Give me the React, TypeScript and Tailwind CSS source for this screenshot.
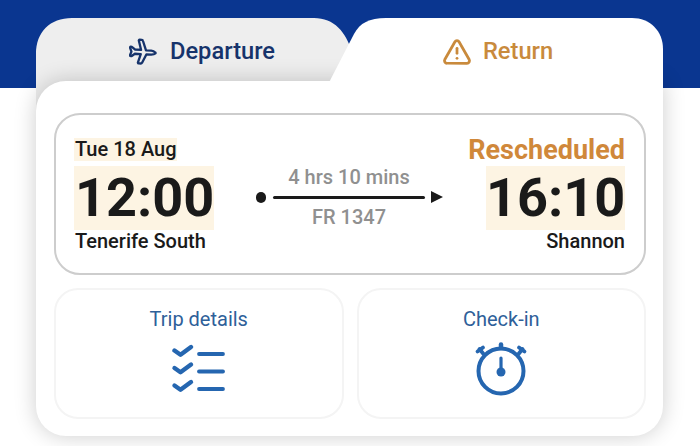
import { TriangleAlert } from "lucide-react";

function PlaneIcon() {
  return (
    <svg width="28" height="28" viewBox="0 0 30 30" fill="none" stroke="#16336b" strokeWidth="2.5" strokeLinejoin="round" strokeLinecap="round">
      <path d="M28 15.500c-.8-1-2.400-1.800-4.200-1.900l-5.600-.4L15 3.200c-.2-.7-.7-1-1.300-1.100l-2.300-.2c-.7 0-1 .5-.8 1.100l2.300 9.700-6.600-.4L3.400 9.800c-.4-.4-.9-.5-1.400-.5-.7.1-1 .7-.8 1.300l1.400 4-1.500 3.800c-.2.600.2 1.100.8 1.100.5 0 1-.2 1.400-.5l3-2.100 6.300.3-3 8.800c-.2.600.2 1.200.8 1.200l2.300.1c.6 0 1-.3 1.300-.8l4.600-8.900 5.300.2c1.900 0 3.600-.5 4.300-1.200.4-.4.400-.8 0-1.100z" />
    </svg>
  );
}

function ChecklistIcon() {
  return (
    <svg width="56" height="50" viewBox="0 0 56 50" fill="none" stroke="#2566b0" strokeLinecap="round" strokeLinejoin="round">
      <g strokeWidth="4.400">
        <path d="M3.500 6.500l6 4.200 10.500-7.700" />
        <path d="M3.500 24l6 4.200 10.500-7.700" />
        <path d="M3.500 41.500l6 4.200 10.500-7.700" />
      </g>
      <g strokeWidth="3.800">
        <path d="M28 10h24" />
        <path d="M28 27.500h24" />
        <path d="M28 45h24" />
      </g>
    </svg>
  );
}

function TimerIcon() {
  return (
    <svg width="54" height="54" viewBox="0 0 54 54" fill="none" stroke="#2566b0" strokeLinecap="round">
      <circle cx="27" cy="29" r="22.500" strokeWidth="4" />
      <path d="M27 6V2.500" strokeWidth="4.500" />
      <path d="M9.500 12L5.500 7" strokeWidth="3.800" />
      <path d="M3.500 9.500L9 5.500" strokeWidth="3.800" />
      <path d="M44.500 12l4-5" strokeWidth="3.800" />
      <path d="M50.500 9.500L45 5.500" strokeWidth="3.800" />
      <path d="M27 16v14" strokeWidth="3.200" />
      <circle cx="27" cy="30" r="4.500" fill="#2566b0" stroke="none" />
    </svg>
  );
}

export default function App() {
  return (
    <div className="h-[446px] w-[700px] overflow-hidden bg-[linear-gradient(#0a3690_88px,#ffffff_88px)] pt-[18px] pl-[36px] font-['Roboto',sans-serif]">
      <div className="relative w-[627px]">
        <svg className="absolute left-0 top-0 z-0" width="340" height="120" viewBox="0 0 340 120" aria-hidden="true">
          <path d="M0 120V36C0 14 14 0 36 0H278C298 0 310 14 316 34L304 56C301 61 298 63 292 63H30V120Z" fill="#eeeeee" />
        </svg>
        <svg className="absolute left-0 top-0 z-[2]" width="627" height="80" viewBox="0 0 627 80" aria-hidden="true">
          <path d="M285 80L318 16C324 5 333 0 350 0H596C614 0 627 13 627 31V80Z" fill="#ffffff" />
        </svg>
        <header className="relative z-[3] flex h-[63px] items-start">
          <div className="flex h-[67px] w-[314px] items-center justify-center gap-[13px] pl-[18px] text-[23.700px] font-medium text-[#16336b]">
            <PlaneIcon />
            <span>Departure</span>
          </div>
          <div className="flex h-[67px] w-[313px] items-center justify-center gap-[11px] pr-[18px] text-[23.700px] font-medium text-[#c98a3c]">
            <TriangleAlert size={30} strokeWidth={2.200} />
            <span>Return</span>
          </div>
        </header>
        <main className="relative z-[1] h-[355px] rounded-tl-[30px] rounded-b-[30px] bg-white pt-[32px] pr-[17px] pl-[18px] shadow-[0_0_22px_rgba(0,0,0,0.2)]">
          <section className="flex h-[162px] items-center rounded-[26px] border-2 border-[#cdcdcd] pt-[3px] pr-[19px] pl-[18px]">
            <div className="flex w-[140px] flex-col items-start">
              <span className="bg-[#fdf4e3] pl-px text-[20px] leading-[23px] font-medium text-[#1a1a1a]">Tue 18 Aug</span>
              <span className="mt-[5px] h-[64px] w-[140px] bg-[#fdf4e3] pl-px text-[54px] leading-[64px] font-bold text-[#1a1a1a]">12:00</span>
              <span className="mt-[-1px] pl-px text-[20px] leading-[24px] font-medium text-[#1a1a1a]">Tenerife South</span>
            </div>
            <div className="ml-[40px] flex w-[190px] flex-col items-center pt-[3px]">
              <span className="text-[20px] leading-[24px] font-medium text-[#909090]">4 hrs 10 mins</span>
              <div className="my-[2px] flex h-[12px] w-[187px] items-center">
                <span className="h-[11px] w-[11px] rounded-full bg-[#1a1a1a]" />
                <span className="ml-[7px] h-[3px] w-[153px] rounded-full bg-[#1a1a1a]" />
                <span className="ml-[6px] h-0 w-0 border-y-[6.500px] border-l-[12px] border-y-transparent border-l-[#1a1a1a]" />
              </div>
              <span className="text-[20px] leading-[24px] font-medium text-[#909090]">FR 1347</span>
            </div>
            <div className="ml-auto flex w-[160px] flex-col items-end">
              <span className="text-[27px] leading-[24px] font-bold text-[#d0883a]">Rescheduled</span>
              <span className="mt-[4px] h-[64px] w-[139px] bg-[#fdf4e3] text-right text-[54px] leading-[64px] font-bold text-[#1a1a1a]">16:10</span>
              <span className="mt-[-1px] text-[20px] leading-[24px] font-medium text-[#1a1a1a]">Shannon</span>
            </div>
          </section>
          <section className="mt-[13px] grid grid-cols-2 gap-[13px]">
            <div className="flex h-[131px] flex-col items-center rounded-[24px] border-2 border-[#f4f4f4] pt-[17px]">
              <span className="text-[20px] leading-[24px] text-[#2e6099]">Trip details</span>
              <div className="mt-[13px]"><ChecklistIcon /></div>
            </div>
            <div className="flex h-[131px] flex-col items-center rounded-[24px] border-2 border-[#f4f4f4] pt-[17px]">
              <span className="text-[20px] leading-[24px] text-[#2e6099]">Check-in</span>
              <div className="mt-[11px]"><TimerIcon /></div>
            </div>
          </section>
        </main>
      </div>
    </div>
  );
}
